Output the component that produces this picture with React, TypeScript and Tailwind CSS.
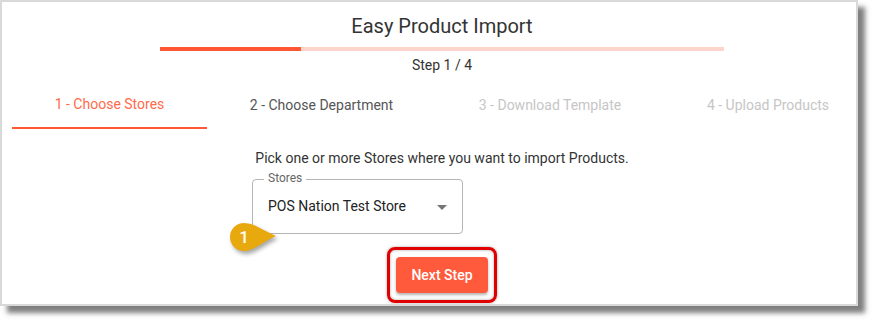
import React from "react";

export default function App() {
  return (
    <div className="w-[874px] h-[321px] bg-white" style={{ fontFamily: "Roboto, 'Liberation Sans', sans-serif" }}>
      <div className="relative w-[858px] h-[306px] border-2 border-[#d9d9d9] bg-white shadow-[7px_7px_5px_rgba(0,0,0,0.5)] overflow-hidden">
        <div className="w-[860px] ml-[10px] flex flex-col items-center pt-[10px]">
          <div className="text-[20px] leading-[28px] text-[#333]">Easy Product Import</div>
          <div className="mt-[7px] w-[564px] h-[4px] bg-[#fdd5cc] flex">
            <div className="w-[141px] h-full bg-[#ff5733]" />
          </div>
          <div className="mt-[4px] text-[14px] leading-[20px] text-[#333]">Step 1 / 4</div>
          <div className="mt-[6px] self-stretch flex text-[14px]">
            <div className="w-[195px] h-[48px] flex items-center justify-center border-b-2 border-[#ff5733] text-[#ff6a4d]">1 - Choose Stores</div>
            <div className="w-[229px] h-[48px] flex items-center justify-center text-[#555]">2 - Choose Department</div>
            <div className="w-[228px] h-[48px] flex items-center justify-center text-[#c6c6c6]">3 - Download Template</div>
            <div className="w-[208px] h-[48px] flex items-center justify-center text-[#c6c6c6]">4 - Upload Products</div>
          </div>
          <div className="mt-[19px] w-[380px] flex flex-col">
            <div className="text-[14px] leading-[20px] text-[#333] text-center whitespace-nowrap">Pick one or more Stores where you want to import Products.</div>
            <div className="relative mt-[11px] w-[211px] h-[55px] border border-[#b5b5b5] rounded-[4px] flex items-center justify-between pl-[15px] pr-[15px]">
              <span className="absolute left-[11px] top-[-10px] bg-white px-[4px] text-[12px] leading-[16px] text-[#666]">Stores</span>
              <span className="text-[14px] text-[#222]">POS Nation Test Store</span>
              <svg width="10" height="5" viewBox="0 0 10 5" className="mt-[1px]">
                <path d="M0 0 L10 0 L5 5 Z" fill="#757575" />
              </svg>
              <div className="absolute left-[-25px] top-[40px] w-[52px] h-[36px]">
                <svg width="52" height="36" viewBox="0 0 52 36" className="absolute inset-0" style={{ filter: "drop-shadow(2px 3px 2px rgba(0,0,0,0.35))" }}>
                  <path d="M16,3 C26,3 34,10 48,16 C34,22 26,31 16,31 A14,14 0 0 1 16,3 Z" fill="#e8a90f" />
                </svg>
                <span className="absolute left-[2px] top-[3px] w-[28px] h-[28px] flex items-center justify-center text-white text-[17px] font-medium leading-none">1</span>
              </div>
            </div>
          </div>
          <div className="relative mt-[23px]">
            <span className="absolute left-[-9px] right-[-9px] top-[-10px] bottom-[-10px] rounded-[8px] border-[3px] border-[#e00000] shadow-[0_0_3px_rgba(0,0,0,0.35),inset_0_0_3px_rgba(0,0,0,0.35)]" />
            <button className="relative w-[92px] h-[36px] rounded-[4px] bg-[#ff5a3c] text-white text-[14px] font-medium shadow-[0_2px_3px_rgba(0,0,0,0.3)]">Next Step</button>
          </div>
        </div>
      </div>
    </div>
  );
}
